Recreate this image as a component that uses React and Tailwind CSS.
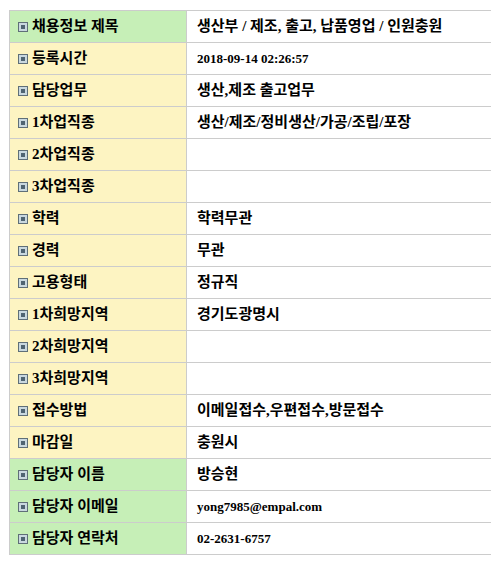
const rows = [
  { label: "채용정보 제목", value: "생산부 / 제조, 출고, 납품영업 / 인원충원", tone: "green" },
  { label: "등록시간", value: "2018-09-14 02:26:57", tone: "yellow", latin: true },
  { label: "담당업무", value: "생산,제조 출고업무", tone: "yellow" },
  { label: "1차업직종", value: "생산/제조/정비생산/가공/조립/포장", tone: "yellow" },
  { label: "2차업직종", value: "", tone: "yellow" },
  { label: "3차업직종", value: "", tone: "yellow" },
  { label: "학력", value: "학력무관", tone: "yellow" },
  { label: "경력", value: "무관", tone: "yellow" },
  { label: "고용형태", value: "정규직", tone: "yellow" },
  { label: "1차희망지역", value: "경기도광명시", tone: "yellow" },
  { label: "2차희망지역", value: "", tone: "yellow" },
  { label: "3차희망지역", value: "", tone: "yellow" },
  { label: "접수방법", value: "이메일접수,우편접수,방문접수", tone: "yellow" },
  { label: "마감일", value: "충원시", tone: "yellow" },
  { label: "담당자 이름", value: "방승현", tone: "green" },
  { label: "담당자 이메일", value: "yong7985@empal.com", tone: "green", latin: true },
  { label: "담당자 연락처", value: "02-2631-6757", tone: "green", latin: true },
];

const Bullet = () => (
  <span className="inline-flex items-center justify-center w-[10px] h-[10px] border border-[#5f6f78] bg-[#c9d8df] mr-[4px] shrink-0">
    <span className="w-[4px] h-[4px] bg-[#4f6472]"></span>
  </span>
);

export default function App() {
  return (
    <div className="min-h-screen bg-white pt-[10px] pl-[9px] overflow-hidden font-['Liberation_Serif','Noto_Sans_CJK_KR',serif] text-black">
      <div className="w-[484px] border-t border-l border-[#cccccc]">
        {rows.map((r) => (
          <div key={r.label} className="flex h-[32px] border-b border-[#cccccc]">
            <div
              className={`w-[177px] shrink-0 flex items-center pl-[8px] border-r border-[#cccccc] text-[15px] font-bold ${
                r.tone === "green" ? "bg-[#c6efb7]" : "bg-[#fdf4c2]"
              }`}
            >
              <Bullet />
              {r.label}
            </div>
            <div
              className={`flex-1 flex items-center pl-[10px] font-bold ${
                r.latin ? "text-[13px]" : "text-[15px]"
              }`}
            >
              {r.value}
            </div>
          </div>
        ))}
      </div>
    </div>
  );
}
